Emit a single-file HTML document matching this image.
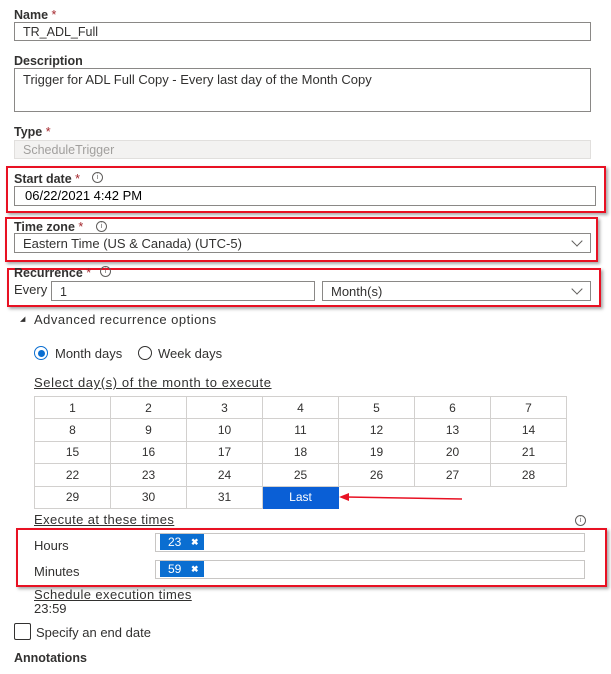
<!DOCTYPE html>
<html><head><style>
body{margin:0;width:611px;height:674px;background:#fff;font-family:"Liberation Sans",sans-serif;font-size:13px;color:#323130;position:relative;overflow:hidden}
.a{position:absolute}
.lbl{font-weight:bold;font-size:12.5px;color:#323130}
.st{color:#a4262c;font-weight:normal}
.in{position:absolute;border:1px solid #8a8886;box-sizing:border-box;background:#fff;padding-left:8px;font-size:12.5px;line-height:18px}
.rb{position:absolute;border:2px solid #e81123;box-sizing:border-box;box-shadow:2px 2px 3px rgba(0,0,0,.35)}
.info{position:absolute;width:9px;height:9px;border:1px solid #605e5c;border-radius:50%;font-size:7px;line-height:9px;text-align:center;color:#605e5c}
.chev{position:absolute;width:7px;height:7px;border-right:1px solid #605e5c;border-bottom:1px solid #605e5c;transform:rotate(45deg)}
table{position:absolute;left:34px;top:396px;border-collapse:collapse}
td{border:1px solid #d2d0ce;width:75px;height:21.4px;text-align:center;padding:0;font-size:12px}
.u{text-decoration:underline}
.chip{position:absolute;background:#0a6ed1;color:#fff;width:44px;height:16px;font-size:12px;line-height:16px;padding-left:8px;box-sizing:border-box}
</style></head><body>
<div class="a lbl" style="left:14px;top:8px">Name <span class="st">*</span></div>
<div class="in" style="left:14px;top:22px;width:577px;height:19px">TR_ADL_Full</div>
<div class="a lbl" style="left:14px;top:54px">Description</div>
<div class="in" style="left:14px;top:68px;width:577px;height:44px;padding-top:2px;font-size:13px">Trigger for ADL Full Copy - Every last day of the Month Copy</div>
<div class="a lbl" style="left:14px;top:125px">Type <span class="st">*</span></div>
<div class="in" style="left:14px;top:140px;width:577px;height:19px;border-color:#e1dfdd;background:#f3f2f1;color:#a19f9d">ScheduleTrigger</div>

<div class="rb" style="left:6px;top:166px;width:600px;height:47px"></div>
<div class="a lbl" style="left:14px;top:172px">Start date <span class="st">*</span></div>
<div class="info" style="left:92px;top:172px">i</div>
<div class="in" style="left:14px;top:186px;width:582px;height:20px;padding-left:10px;color:#000;font-size:13px">06/22/2021 4:42 PM</div>

<div class="rb" style="left:5px;top:217px;width:593px;height:45px"></div>
<div class="a lbl" style="left:14px;top:220px">Time zone <span class="st">*</span></div>
<div class="info" style="left:96px;top:221px">i</div>
<div class="in" style="left:14px;top:233px;width:577px;height:20px;line-height:20px;font-size:13px">Eastern Time (US &amp; Canada) (UTC-5)</div>
<div class="chev" style="left:573px;top:237px"></div>

<div class="rb" style="left:7px;top:268px;width:594px;height:39px"></div>
<div class="a lbl" style="left:14px;top:266px">Recurrence <span class="st">*</span></div>
<div class="info" style="left:100px;top:266px">i</div>
<div class="a" style="left:14px;top:282px;font-size:13px">Every</div>
<div class="in" style="left:51px;top:281px;width:264px;height:20px;line-height:20px">1</div>
<div class="in" style="left:322px;top:281px;width:269px;height:20px;line-height:20px;font-size:13px">Month(s)</div>
<div class="chev" style="left:573px;top:285px"></div>

<div class="a" style="left:20px;top:315px;font-size:7px">&#9698;</div>
<div class="a" style="left:34px;top:312px;font-size:13px;letter-spacing:0.5px">Advanced recurrence options</div>
<div class="a" style="left:34px;top:346px;width:14px;height:14px;border:1px solid #0a6ed1;border-radius:50%;box-sizing:border-box"><div style="margin:2.5px;width:7px;height:7px;border-radius:50%;background:#0a6ed1"></div></div>
<div class="a" style="left:55px;top:346px">Month days</div>
<div class="a" style="left:138px;top:346px;width:14px;height:14px;border:1px solid #323130;border-radius:50%;box-sizing:border-box"></div>
<div class="a" style="left:158px;top:346px">Week days</div>
<div class="a u" style="left:34px;top:375px;letter-spacing:0.6px">Select day(s) of the month to execute</div>
<table>
<tr><td>1</td><td>2</td><td>3</td><td>4</td><td>5</td><td>6</td><td>7</td></tr>
<tr><td>8</td><td>9</td><td>10</td><td>11</td><td>12</td><td>13</td><td>14</td></tr>
<tr><td>15</td><td>16</td><td>17</td><td>18</td><td>19</td><td>20</td><td>21</td></tr>
<tr><td>22</td><td>23</td><td>24</td><td>25</td><td>26</td><td>27</td><td>28</td></tr>
<tr><td>29</td><td>30</td><td>31</td><td style="background:#0a5fd6;color:#fff;border-color:#0a5fd6">Last</td><td style="border:none"></td><td style="border:none"></td><td style="border:none"></td></tr>
</table>
<svg class="a" style="left:336px;top:490px" width="130" height="14"><line x1="10" y1="7" x2="126" y2="9" stroke="#e81123" stroke-width="1.5"/><polygon points="3,7 13,3 13,11" fill="#e81123"/></svg>

<div class="a u" style="left:34px;top:512px;letter-spacing:0.4px">Execute at these times</div>
<div class="info" style="left:575px;top:515px">i</div>
<div class="rb" style="left:16px;top:528px;width:591px;height:59px"></div>
<div class="a" style="left:34px;top:538px">Hours</div>
<div class="in" style="left:155px;top:533px;width:430px;height:19px;border-color:#c8c6c4"></div>
<div class="chip" style="left:160px;top:534px">23 <b style="position:absolute;left:31px;font-size:9px">✖</b></div>
<div class="a" style="left:34px;top:564px">Minutes</div>
<div class="in" style="left:155px;top:560px;width:430px;height:19px;border-color:#c8c6c4"></div>
<div class="chip" style="left:160px;top:561px">59 <b style="position:absolute;left:31px;font-size:9px">✖</b></div>
<div class="a u" style="left:34px;top:587px;letter-spacing:0.4px">Schedule execution times</div>
<div class="a" style="left:34px;top:601px">23:59</div>
<div class="a" style="left:14px;top:623px;width:17px;height:17px;border:1px solid #323130;border-radius:2px;box-sizing:border-box"></div>
<div class="a" style="left:36px;top:625px">Specify an end date</div>
<div class="a lbl" style="left:14px;top:651px">Annotations</div>
</body></html>
